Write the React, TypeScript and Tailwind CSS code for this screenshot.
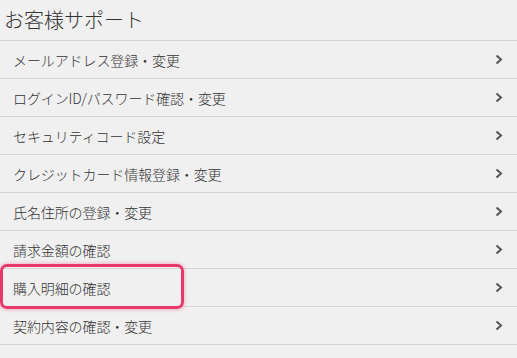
import React from 'react';

const ITEMS = [
    'メールアドレス登録・変更',
    'ログインID/パスワード確認・変更',
    'セキュリティコード設定',
    'クレジットカード情報登録・変更',
    '氏名住所の登録・変更',
    '請求金額の確認',
    '購入明細の確認',
    '契約内容の確認・変更',
];

const Chevron = () => (
    <svg width="8" height="11" viewBox="0 0 8 11" fill="none" className="shrink-0">
        <path d="M1.5 1.5 L6 5.5 L1.5 9.5" stroke="#555" strokeWidth="2" strokeLinejoin="miter" />
    </svg>
);

const App: React.FC = () => {
    return (
        <div
            className="w-[517px] h-[358px] bg-[#f0f0f0] overflow-hidden text-[#333]"
            style={{ fontFamily: '"Noto Sans CJK JP", "Noto Sans", sans-serif' }}
        >
            <header className="h-[41px] flex items-center pl-[4px] border-b border-[#d6d6d6]">
                <h1 className="text-[20px] font-light leading-none">お客様サポート</h1>
            </header>
            <ul>
                {ITEMS.map((item, i) => (
                    <li
                        key={item}
                        className="relative h-[38px] flex items-center justify-between pl-[13px] pr-[14px] border-b border-[#d6d6d6]"
                    >
                        <span className="text-[14px] font-light leading-none tracking-[-0.1px]">{item}</span>
                        <Chevron />
                        {i === 6 && (
                            <div className="absolute left-[0px] top-[-5px] w-[184px] h-[45px] rounded-[7px] border-[3px] border-[#e8386c] shadow-[0_0_4px_rgba(232,56,108,0.45)] pointer-events-none" />
                        )}
                    </li>
                ))}
            </ul>
        </div>
    );
};

export default App;
